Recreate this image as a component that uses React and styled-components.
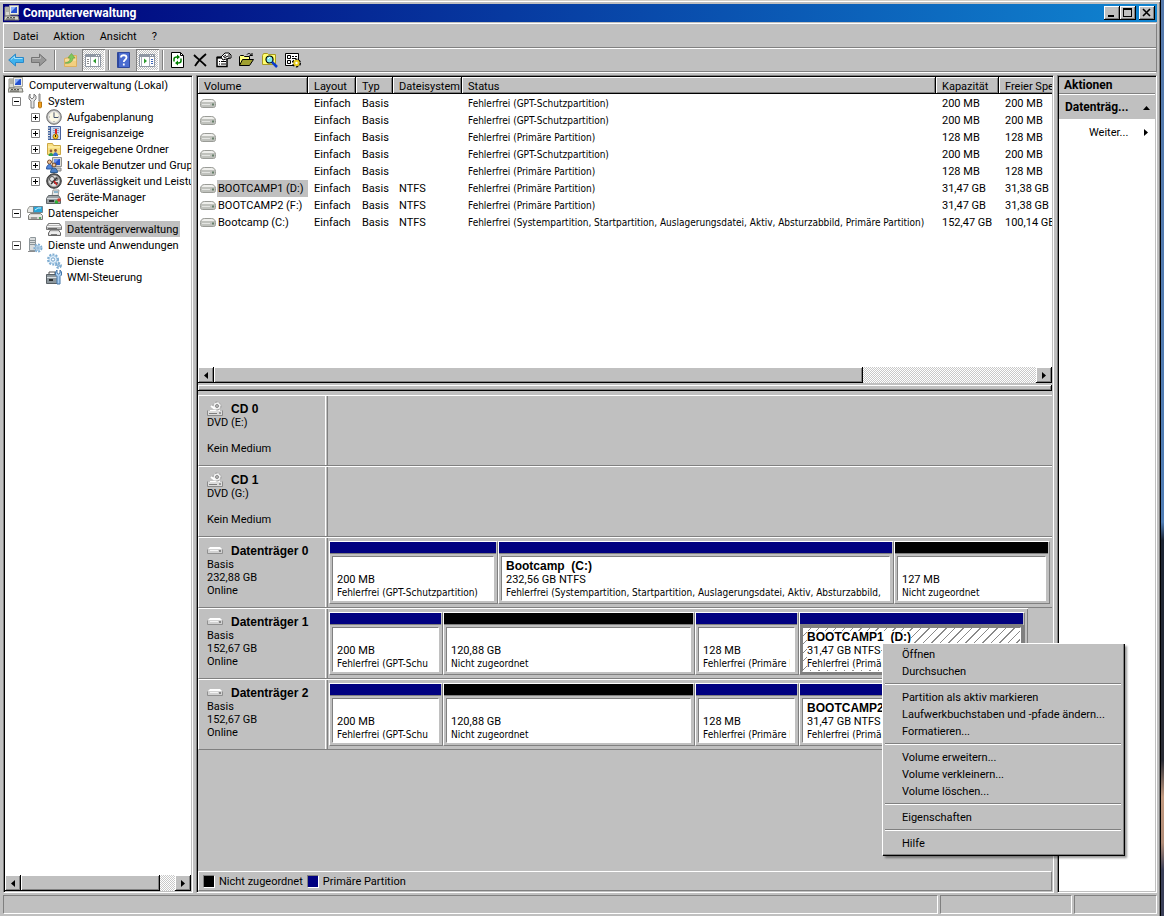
import { Fragment } from "react";
import styled, { createGlobalStyle, css } from "styled-components";

const GlobalStyle = createGlobalStyle`
  * {
    box-sizing: border-box;
  }

  body {
    margin: 0;
    font-family: Roboto, "Liberation Sans", sans-serif;
    font-size: 11px;
    line-height: 13px;
    color: #000;
    overflow: hidden;
  }

  svg {
    flex: none;
  }

  button {
    font: inherit;
    color: inherit;
    border: 0;
    padding: 0;
    background: none;
  }

  ul {
    list-style: none;
    margin: 0;
    padding: 0;
  }
`;

const raised = css`
  background: #c0c0c0;
  box-shadow: inset -1px -1px 0 #000, inset 1px 1px 0 #fff,
    inset -2px -2px 0 #808080;
`;

const Desktop = styled.div`
  height: 100vh;
  padding-right: 3px;
  background: linear-gradient(
    #5579ab 0%,
    #4f7db5 57%,
    #1c2433 59%,
    #2a2c35 83%,
    #c29a80 87%,
    #b08c78 92%,
    #3a3f58 95%
  );
`;

const Frame = styled.div`
  position: relative;
  height: 100%;
  display: flex;
  flex-direction: column;
  padding: 4px 3px 2px;
  background: #c0c0c0;
  border-right: 1px solid #000;
  box-shadow: inset 0 1px 0 #d4d0c8, inset 0 2px 0 #fff,
    inset -1px 0 0 #808080;
`;

const TitleBar = styled.header`
  height: 18px;
  flex: none;
  display: flex;
  align-items: center;
  gap: 3px;
  padding: 0 2px 0 1px;
  background: linear-gradient(90deg, #00007b, #1084d0);
  color: #fff;
`;

const Title = styled.h1`
  flex: 1;
  margin: 0;
  font-size: 12px;
  line-height: 16px;
  font-weight: 700;
`;

const CaptionButton = styled.button`
  width: 16px;
  height: 14px;
  ${raised}

  & + & {
    margin-left: -3px;
  }

  &:last-child {
    margin-left: 0;
  }

  svg {
    display: block;
    margin: auto;
  }
`;

const Bars = styled.div`
  flex: none;
  margin: 1px 0 2px;
  border: 1px solid #fff;
  border-right-color: #808080;
`;

const MenuBar = styled.nav`
  height: 24px;
  display: flex;
  align-items: center;
  padding: 2px 0 0 1px;
  border-bottom: 1px solid #808080;
`;

const MenuButton = styled.button`
  padding: 0 7px 0 8px;
`;

const Toolbar = styled.div`
  height: 24px;
  display: flex;
  align-items: center;
  padding-left: 1px;
  border-top: 1px solid #fff;
  border-bottom: 1px solid #808080;
`;

const ToolButton = styled.button`
  width: 23px;
  height: 22px;
  display: grid;
  place-items: center start;
  padding-left: 3px;
  ${(p) =>
    p.$pressed &&
    css`
      background: conic-gradient(#fff 25%, #c0c0c0 0 50%, #fff 0 75%, #c0c0c0 0)
        0 0 / 2px 2px;
      box-shadow: inset 1px 1px 0 #808080, inset -1px -1px 0 #fff;
    `}
`;

const ToolSeparator = styled.span`
  width: 2px;
  height: 20px;
  margin: 0 3px;
  border-left: 1px solid #808080;
  border-right: 1px solid #fff;
`;

const Main = styled.main`
  flex: 1;
  min-height: 0;
  display: flex;
  gap: 3px;
`;

const Panel = styled.section`
  min-width: 0;
  display: flex;
  flex-direction: column;
  padding: 1px;
  border: 1px solid #808080;
  border-right-color: #fff;
  border-bottom-color: #fff;
  box-shadow: inset 1px 1px 0 #000;
`;

const TreePanel = styled(Panel)`
  flex: 0 0 190px;
`;

const CenterPanel = styled(Panel)`
  flex: 1;
`;

const ActionPanel = styled(Panel)`
  flex: 0 0 100px;
`;

const Tree = styled.ul`
  flex: 1;
  overflow: hidden;
  background: #fff;
`;

const TreeRow = styled.li`
  height: 16px;
  display: flex;
  align-items: center;
  padding-left: ${(p) => [3, 7, 26][p.$depth]}px;
  white-space: nowrap;
`;

const Expander = styled.button`
  flex: none;
  width: 9px;
  height: 9px;
  margin-right: 6px;
  visibility: ${(p) => (p.$hidden ? "hidden" : "visible")};

  svg {
    display: block;
  }
`;

const TreeLabel = styled.span`
  margin-left: 3px;
  padding: 2px 2px 1px;
  background: ${(p) => (p.$selected ? "#c0c0c0" : "transparent")};
`;

const ScrollBar = styled.div`
  flex: none;
  height: 16px;
  display: flex;
`;

const ScrollArrow = styled.button`
  width: 16px;
  display: grid;
  place-items: center;
  ${raised}
`;

const ScrollTrack = styled.div`
  flex: 1;
  background: conic-gradient(#fff 25%, #c8c8c8 0 50%, #fff 0 75%, #c8c8c8 0) 0 0 /
    2px 2px;
`;

const ScrollThumb = styled.div`
  width: ${(p) => p.$size}%;
  height: 100%;
  ${raised}
`;

const VolumeList = styled.div`
  flex: 0 0 290px;
  overflow: hidden;
  background: #fff;
`;

const Table = styled.table`
  table-layout: fixed;
  width: 100%;
  min-width: 921px;
  border-collapse: separate;
  border-spacing: 0;
  white-space: nowrap;

  th {
    height: 17px;
    padding: 1px 0 0 6px;
    text-align: left;
    font-weight: 400;
    ${raised}
  }

  td {
    height: 17px;
    padding: 0 0 0 6px;
    overflow: hidden;
  }

  td:first-child {
    padding: 0 0 0 2px;
  }

  tbody::before {
    content: "";
    display: table-row;
    height: 1px;
  }
`;

const StatusText = styled.span`
  font-family: "DejaVu Sans Condensed", "Liberation Sans", sans-serif;
  font-size: 10px;
`;

const VolumeCell = styled.div`
  display: flex;
  align-items: center;
  height: 17px;
`;

const VolumeName = styled.span`
  flex: 1;
  margin-left: 1px;
  padding: 2px 1px;
  background: ${(p) => (p.$selected ? "#c0c0c0" : "transparent")};
`;

const Splitter = styled.div`
  flex: none;
  height: 6px;
  margin: 2px 0 4px;
  ${raised}
`;

const DiskList = styled.div`
  flex: 1;
  min-height: 0;
  overflow: hidden;
`;

const DiskRow = styled.div`
  width: ${(p) => p.$span}%;
  height: 71px;
  display: flex;
  border-top: 1px solid #fff;
  border-bottom: 1px solid #808080;
  border-left: 1px solid #fff;
`;

const DiskLabel = styled.div`
  flex: 0 0 127px;
  padding: 6px 0 0 8px;
  border-right: 1px solid #fff;
`;

const DiskTitle = styled.div`
  height: 14px;
  display: flex;
  align-items: center;
  gap: 8px;
`;

const DiskName = styled.strong`
  font-family: "Liberation Sans", Arial, sans-serif;
  font-size: 12px;
`;

const DiskLine = styled.div`
  height: 13px;
`;

const Partitions = styled.div`
  flex: 1;
  min-width: 0;
  display: grid;
  grid-template-columns: ${(p) => p.$columns};
  margin-left: 1px;
  padding: 3px 2px 3px 1px;
  border-left: 1px solid #808080;
  border-right: ${(p) => (p.$open ? "0" : "1px solid #808080")};
`;

const Partition = styled.div`
  min-width: 0;
  display: flex;
  flex-direction: column;
  border: 1px solid #fff;
  border-right-color: #808080;
  border-bottom-color: #808080;
`;

const Band = styled.div`
  height: 12px;
  margin-right: 1px;
  background: ${(p) => p.$color};
  border-bottom: 1px solid #808080;
`;

const PartitionBody = styled.div`
  flex: 1;
  padding: 2px 3px 2px 2px;
  background: ${(p) => (p.$selected ? "#808080" : "#c0c0c0")};
`;

const PartitionBox = styled.div`
  height: 100%;
  padding: 3px 4px 0;
  overflow: hidden;
  white-space: nowrap;
  border: 1px solid #fff;
  border-top-color: #808080;
  border-left-color: #808080;
  background: ${(p) =>
    p.$selected
      ? "repeating-linear-gradient(135deg, #fff 0 5px, #8a8a8a 5px 6px)"
      : "#fff"};
`;

const PartitionLine = styled.div`
  height: 13px;
  overflow: hidden;

  span,
  strong {
    display: inline-block;
    background: #fff;
    white-space: pre;
  }

  strong {
    font-family: "Liberation Sans", Arial, sans-serif;
    font-size: 12px;
  }
`;

const Legend = styled.div`
  flex: none;
  height: 20px;
  display: flex;
  align-items: center;
  gap: 4px;
  padding-left: 4px;
  border: 1px solid #808080;
  border-top-color: #fff;
  border-left-color: #fff;
`;

const Swatch = styled.span`
  width: 12px;
  height: 13px;
  background: ${(p) => p.$color};
  border: 1px solid #fff;
  border-top-color: #808080;
  border-left-color: #808080;
`;

const ActionHeader = styled.h2`
  height: 17px;
  margin: 0;
  padding: 2px 5px;
  font-size: 12px;
  line-height: 13px;
  border-bottom: 1px solid #808080;
`;

const ActionGroup = styled.button`
  height: 25px;
  flex: none;
  display: flex;
  align-items: center;
  justify-content: space-between;
  padding: 1px 5px 0 6px;
  border-top: 1px solid #fff;
  font-size: 12px;
  font-weight: 700;
`;

const ActionList = styled.div`
  flex: 1;
  padding-top: 5px;
  background: #fff;
`;

const ActionItem = styled.button`
  width: 100%;
  height: 17px;
  display: flex;
  align-items: center;
  justify-content: space-between;
  padding: 0 5px 0 30px;
`;

const StatusBar = styled.footer`
  flex: none;
  height: 19px;
  display: flex;
  gap: 2px;
  margin-top: 2px;
`;

const StatusCell = styled.div`
  flex: ${(p) => p.$flex};
  border: 1px solid #fff;
  border-top-color: #808080;
  border-left-color: #808080;
`;

const ContextMenu = styled.ul`
  position: absolute;
  left: 882px;
  top: 643px;
  width: 242px;
  padding: 3px;
  background: #c0c0c0;
  box-shadow: inset 1px 1px 0 #fff, inset -1px -1px 0 #808080, 1px 1px 0 #000,
    3px 3px 2px rgba(0, 0, 0, 0.4);
`;

const ContextButton = styled.button`
  display: block;
  width: 100%;
  height: 17px;
  padding-left: 17px;
  text-align: left;
`;

const ContextSeparator = styled.li`
  height: 2px;
  margin: 3px 0 4px;
  border-top: 1px solid #808080;
  border-bottom: 1px solid #fff;
`;

function Icon({ children }) {
  return (
    <svg width="16" height="16" viewBox="0 0 16 16" fill="none" aria-hidden="true">
      {children}
    </svg>
  );
}

const ComputerIcon = () => (
  <Icon>
    <path d="M1 2h5v9H1z" fill="#d8d8d0" stroke="#8f8f88" />
    <path d="M2 4h3M2 6h3" stroke="#8a8a80" />
    <path d="M5.500 .5h9v9h-9z" fill="#ecece6" stroke="#a5a59e" />
    <path d="M7 2h6v6H7z" fill="#2450d0" />
    <path d="M7 2h5L7 7z" fill="#8cb0f8" />
    <path d="M1 11h13l1 4H0z" fill="#d4d4cc" stroke="#77776f" />
    <path d="M3 12.500h2M6 12.500h2M9 12.500h2M2 14h9" stroke="#55554f" />
  </Icon>
);

const ToolsIcon = () => (
  <Icon>
    <path
      d="M3 1v3l2 2 2-2V1l2 2v3L7 8v7H4V8L2 6V3z"
      fill="#e6e6e6"
      stroke="#7c7c7c"
    />
    <path d="M12 1h1v7h-1z" fill="#eee" stroke="#888" />
    <path d="M11.500 9h3v5l-1 1h-1l-1-1z" fill="#f0a020" stroke="#b87410" />
  </Icon>
);

const ClockIcon = () => (
  <Icon>
    <circle cx="8" cy="8" r="7.300" fill="#b5b5b5" stroke="#717171" />
    <circle cx="8" cy="8" r="5.500" fill="#fbf8e4" stroke="#e2e2e2" />
    <path d="M8 4v4.500h4" stroke="#46536e" />
    <path d="M8 3v1M8 12v1M3 8h1M12 8h1" stroke="#8c8c8c" />
  </Icon>
);

const EventIcon = () => (
  <Icon>
    <path d="M2.500 1.500h12v13h-12z" fill="#c8d8f4" stroke="#4a629c" />
    <path d="M2 1h3v14H2z" fill="#41629e" />
    <path d="M1 3h3M1 5.500h3M1 8h3M1 10.500h3M1 13h3" stroke="#ececec" />
    <path d="M7 3.500h6M7 5.500h6M7 7.500h6" stroke="#8d9fc6" />
    <path d="M9 4h2v5H9z" fill="#d22" />
    <circle cx="9.500" cy="11.500" r="2.500" fill="#f5c52b" stroke="#a9780e" />
    <path d="M9.500 10v2" stroke="#222" />
  </Icon>
);

const SharedFolderIcon = () => (
  <Icon>
    <path d="M1.500 2.500h5l1 2h7v9h-13z" fill="#f9df80" stroke="#cba744" />
    <path d="M2 6h12" stroke="#fff4bb" />
    <circle cx="5" cy="10" r="1.400" fill="#8e5b34" />
    <circle cx="9.500" cy="9.500" r="1.400" fill="#8e5b34" />
    <path d="M2.500 15c0-4 5-4 5 0z" fill="#2fa04b" />
    <path d="M7 15c0-5 5-5 5 0z" fill="#3972cf" />
  </Icon>
);

const UsersIcon = () => (
  <Icon>
    <path d="M6.500 .5h9v9h-9z" fill="#dadad4" stroke="#93938d" />
    <path d="M8 2h6v6H8z" fill="#2653c8" />
    <path d="M8 2h5L8 7z" fill="#6d94ee" />
    <path d="M9 11h6v3H9z" fill="#c8c8c0" stroke="#888" />
    <circle cx="3.500" cy="5" r="2" fill="#edc49b" stroke="#7a4f2e" />
    <path d="M.5 12c0-6 6-6 6 0z" fill="#5287da" stroke="#2d569f" />
    <circle cx="8" cy="8" r="2" fill="#edc49b" stroke="#6f4627" />
    <path d="M4.500 15.500c0-6 7-6 7 0z" fill="#4a7fc8" stroke="#2d5a8c" />
  </Icon>
);

const GaugeIcon = () => (
  <Icon>
    <circle cx="8" cy="8" r="7.300" fill="#5a5a5a" stroke="#3c3c3c" />
    <circle cx="8" cy="8" r="5.500" fill="#e6e6e6" stroke="#aaa" />
    <circle cx="6" cy="6" r="2.500" stroke="#555" />
    <circle cx="10.500" cy="6" r="1.500" stroke="#555" />
    <path d="M5 11l6-6M8 10h4" stroke="#333" strokeWidth="1.500" />
    <path d="M8 8l3 4" stroke="#c22" strokeWidth="1.500" />
  </Icon>
);

const DeviceIcon = () => (
  <Icon>
    <path d="M7 1h6l-1 6H6z" fill="#e8e8e8" stroke="#9a9a9a" />
    <path d="M8 3h4" stroke="#8ab4cc" strokeWidth="2" />
    <path d="M.5 9.500l2-3h10l2 3v5H.5z" fill="#9aa0a4" stroke="#5f6568" />
    <path d="M1 9.500h13" stroke="#d8dcdf" />
    <path d="M3 12h5" stroke="#2f3335" strokeWidth="2" />
    <circle cx="10.500" cy="13" r="1.800" fill="#2eb135" />
    <circle cx="13" cy="11" r="1.800" fill="#d5392c" />
  </Icon>
);

const StorageIcon = () => (
  <Icon>
    <path d="M.5 4.500l2-3h6v6h-8z" fill="#e6e6e2" stroke="#95958f" />
    <path d="M6.500 1.500h9v6h-9z" fill="#28a5d8" stroke="#6d8490" />
    <path d="M8 5l3-2h3" stroke="#c8f0ff" />
    <path d="M1.500 10.500l2-2h10l2 2v4h-14z" fill="#d4d4cf" stroke="#7d7d79" />
    <path d="M2 11h13" stroke="#fff" />
    <path d="M4 13h6" stroke="#666" />
    <path d="M12 13h2" stroke="#269b38" strokeWidth="1.500" />
  </Icon>
);

const DiskManagerIcon = () => (
  <Icon>
    <path d="M.5 5.500l2-3h11l2 3v3H.5z" fill="#b8b8b8" stroke="#777" />
    <path d="M3 3.500h10M1 5.500h14" stroke="#f4f4f4" />
    <path d="M2 7.500h9" stroke="#666" />
    <path d="M2.500 12l2-3h8l2 3v2.500h-12z" fill="#dcdcdc" stroke="#666" />
    <path d="M4 12h10" stroke="#fff" />
    <path d="M5 13.500h6" stroke="#777" />
  </Icon>
);

function Gear({ cx, cy, r }) {
  return (
    <>
      <circle
        cx={cx}
        cy={cy}
        r={r}
        stroke="#7fadd2"
        strokeWidth="2"
        strokeDasharray="2 1.200"
      />
      <circle cx={cx} cy={cy} r={r - 1} fill="#e4f1fb" stroke="#9cc2e0" />
      <circle cx={cx} cy={cy} r={r / 3} fill="#fff" stroke="#6f9fc8" />
    </>
  );
}

const ServerGearIcon = () => (
  <Icon>
    <path d="M2.500 1.500l1-1h5v13h-6z" fill="#d9dcdd" stroke="#8f979b" />
    <path d="M3 3.500h5M3 5.500h5M3 7.500h5" stroke="#8b9498" />
    <path d="M1 14.500h7" stroke="#8c8c8c" />
    <Gear cx={11} cy={11} r={3.500} />
  </Icon>
);

const GearsIcon = () => (
  <Icon>
    <Gear cx={7} cy={6.500} r={5} />
    <Gear cx={12.500} cy={12.500} r={2.400} />
  </Icon>
);

const WmiIcon = () => (
  <Icon>
    <path d="M3 5V3h6v2" stroke="#555" />
    <path d="M.5 5.500h12v9H.5z" fill="#8d979d" stroke="#575f64" />
    <path d="M1 8.500h11" stroke="#dbe1e4" />
    <path d="M3 11h4" stroke="#2a2e30" strokeWidth="2" />
    <path
      d="M11 1v3l1.500 1L14 4V1l1.500 2v3L14 7.500V15h-3V7.500L9.500 6V3z"
      fill="#a8cdf0"
      stroke="#4476a8"
    />
  </Icon>
);

const DriveIcon = () => (
  <Icon>
    <path
      d="M.5 7.500c0-2 1.500-4 4-4h7c2.500 0 4 2 4 4v2c0 1-.5 2-2 2h-11c-1.500 0-2-1-2-2z"
      fill="#c0c2bd"
      stroke="#9a9c97"
    />
    <path d="M4.500 4h7c1.500 0 2.500 1 3 2h-13c.5-1 1.500-2 3-2z" fill="#efefec" />
    <path d="M2 8.500h8" stroke="#e4e5e2" />
    <path d="M12 7.500h2v2h-2z" fill="#67806b" />
  </Icon>
);

const PaleDriveIcon = () => (
  <Icon>
    <path d="M.5 6.500v4h15v-4" stroke="#909090" />
    <path d="M1 6h14v4H1z" fill="#d2d2d2" />
    <path d="M3 4h10l2 2H1z" fill="#fff" />
    <path d="M3 7.500h8" stroke="#f4f4f4" />
    <path d="M12 7h2v2h-2z" fill="#868686" />
  </Icon>
);

const CdDriveIcon = () => (
  <Icon>
    <path d="M.5 9.500v5h15v-5" stroke="#8a8a8a" />
    <path d="M1 10h14v4H1z" fill="#ddd" />
    <path d="M2 12.500h8" stroke="#7e7e7e" />
    <path d="M12 12h2" stroke="#555" />
    <path d="M3 9.500h10" stroke="#fff" />
    <circle cx="10" cy="5" r="4" fill="#f1f1f1" stroke="#999" strokeDasharray="3 1" />
    <circle cx="10" cy="5" r="1.500" fill="#bbb" stroke="#888" />
    <path d="M4 5l4 3" stroke="#fff" strokeWidth="2" />
  </Icon>
);

const BackIcon = () => (
  <Icon>
    <path
      d="M.7 8L7.500 2v3.500h8v5h-8V14z"
      fill="#3fb2ee"
      stroke="#2b88c8"
      strokeLinejoin="round"
    />
    <path d="M3 7.500L6.500 4.500v2h8" stroke="#a5e1fb" />
  </Icon>
);

const ForwardIcon = () => (
  <Icon>
    <path
      d="M15.300 8L8.500 2v3.500h-8v5h8V14z"
      fill="#989898"
      stroke="#747474"
      strokeLinejoin="round"
    />
    <path d="M1.500 6.500h8v-2" stroke="#bdbdbd" />
  </Icon>
);

const UpFolderIcon = () => (
  <Icon>
    <path d="M2.500 6.500l4-1 1-2h7v11h-12z" fill="#f3cf80" stroke="#dcb060" />
    <path d="M3 8h11" stroke="#fceab0" />
    <path
      d="M3 11c4-1 5-2 5-5H6l3.500-4.500L13 6h-2c0 4-4 6-8 5z"
      fill="#7fc95c"
      stroke="#5a9e48"
      strokeWidth=".6"
    />
  </Icon>
);

const PaneLeftIcon = () => (
  <Icon>
    <path d="M.5 2.500h15v12H.5z" fill="#fff" stroke="#8e96a2" />
    <path d="M1 4h14" stroke="#8e96a2" strokeWidth="2" />
    <path d="M11 3.500h1M13 3.500h1" stroke="#fff" />
    <path d="M2 7.500h2M2 9.500h2M2 11.500h2" stroke="#888" />
    <path d="M5.500 5v9M13.500 5v9" stroke="#a6adb8" />
    <path d="M11 6.500v5L8 9z" fill="#2c9a2c" />
  </Icon>
);

const PaneRightIcon = () => (
  <Icon>
    <path d="M.5 2.500h15v12H.5z" fill="#fff" stroke="#8e96a2" />
    <path d="M1 4h14" stroke="#8e96a2" strokeWidth="2" />
    <path d="M11 3.500h1M13 3.500h1" stroke="#fff" />
    <path d="M12 7.500h2M12 9.500h2M12 11.500h2" stroke="#3c63b8" />
    <path d="M10.500 5v9M2.500 5v9" stroke="#a6adb8" />
    <path d="M5 6.500v5L8 9z" fill="#2c9a2c" />
  </Icon>
);

const HelpIcon = () => (
  <Icon>
    <path d="M1.500 .5h12v15h-12z" fill="#4a6cd0" stroke="#2f489c" />
    <path d="M2.500 1v14" stroke="#2f489c" />
    <path
      d="M5 5.500c0-3 5.500-3 5.500 0C10.500 8 7.800 7.500 7.800 10M7.800 11.500v2"
      stroke="#fff"
      strokeWidth="1.800"
    />
  </Icon>
);

const RefreshIcon = () => (
  <Icon>
    <path d="M1.500 .5h9l3 3v12h-12z" fill="#fff" stroke="#000" />
    <path d="M10.500 .5v3h3" stroke="#000" />
    <path d="M4 9.500V7c0-1.500 1-2 3-2M11 6.500V9c0 1.500-1 2-3 2" stroke="#008000" strokeWidth="1.500" />
    <path d="M7 2.500l3 2.500-3 2.500zM8 8.500L5 11l3 2.500z" fill="#008000" />
  </Icon>
);

const DeleteIcon = () => (
  <Icon>
    <path d="M1 3c3 3 7 6 12 11M13 2C8 6 5 9 2 14" stroke="#000" strokeWidth="1.800" />
  </Icon>
);

const PropertiesIcon = () => (
  <Icon>
    <path d="M1 5.500h10v9H1z" fill="#fff" stroke="#000" strokeWidth="1.500" />
    <path d="M1 5.500h10" stroke="#000" strokeWidth="2" />
    <path d="M3 9.500h1M5 9.500h5M3 12h1M5 12h5" stroke="#000" />
    <path d="M5 5l4-4h4l2 2v3l-5 1-3 1z" fill="#fff" stroke="#000" />
    <path d="M7 5l3-2M8 6l4-2M13 2v4" stroke="#000" />
  </Icon>
);

const OpenFolderIcon = () => (
  <Icon>
    <path d="M.5 13.500v-9l1-1h3l1 1h5v3" fill="#ffff80" stroke="#000" />
    <path d="M.5 13.500l3-6h11l-4 6z" fill="#a0a030" stroke="#000" />
    <path d="M8 2.500c1-1.500 4-1.500 4 1M10.500 3.500h3M13 1v3" stroke="#000" />
  </Icon>
);

const SearchIcon = () => (
  <Icon>
    <path d="M.5 3.500l1-2h4l1 1h7v10H.5z" fill="#ffff70" stroke="#a89a20" />
    <circle cx="7.500" cy="7.500" r="3.500" fill="#7fe8f0" stroke="#000" strokeWidth="1.200" />
    <path d="M6 7l2-2" stroke="#fff" />
    <path d="M10 10l5 5" stroke="#0a3acb" strokeWidth="2.500" />
  </Icon>
);

const SettingsIcon = () => (
  <Icon>
    <path d="M.5 1.500h13v12H.5z" fill="#fff" stroke="#000" />
    <path d="M2.500 3.500h3v3h-3zM2.500 8.500h3v3h-3z" fill="#fff" stroke="#000" />
    <path d="M7 4.500h2M10 4.500h2M7 6.500h4M7 9.500h2" stroke="#000" />
    <circle cx="11.500" cy="11" r="3.200" stroke="#000" strokeWidth="2.600" strokeDasharray="2 1.400" />
    <circle cx="11.500" cy="11" r="2.200" fill="#fff" stroke="#e8cc20" strokeWidth="2" />
  </Icon>
);

function Arrow({ dir }) {
  const paths = {
    left: "M5 0v7L1 3.500z",
    right: "M1 0v7l4-3.500z",
    up: "M0 6h7L3.500 2z",
  };
  return (
    <svg width="7" height="7" viewBox="0 0 7 7" aria-hidden="true">
      <path d={paths[dir]} fill="#000" />
    </svg>
  );
}

function HScroll({ size }) {
  return (
    <ScrollBar>
      <ScrollArrow aria-label="Nach links">
        <Arrow dir="left" />
      </ScrollArrow>
      <ScrollTrack>
        <ScrollThumb $size={size} />
      </ScrollTrack>
      <ScrollArrow aria-label="Nach rechts">
        <Arrow dir="right" />
      </ScrollArrow>
    </ScrollBar>
  );
}

const menus = ["Datei", "Aktion", "Ansicht", "?"];

const tools = [
  { label: "Zurück", icon: BackIcon },
  { label: "Vorwärts", icon: ForwardIcon },
  null,
  { label: "Übergeordneter Ordner", icon: UpFolderIcon },
  { label: "Konsolenstruktur", icon: PaneLeftIcon, pressed: true },
  null,
  { label: "Hilfe", icon: HelpIcon },
  { label: "Aktionsbereich", icon: PaneRightIcon, pressed: true },
  null,
  { label: "Aktualisieren", icon: RefreshIcon },
  { label: "Löschen", icon: DeleteIcon },
  { label: "Eigenschaften", icon: PropertiesIcon },
  { label: "Öffnen", icon: OpenFolderIcon },
  { label: "Suchen", icon: SearchIcon },
  { label: "Einstellungen", icon: SettingsIcon },
];

const tree = [
  { depth: 0, label: "Computerverwaltung (Lokal)", icon: ComputerIcon },
  { depth: 1, label: "System", icon: ToolsIcon, box: "minus" },
  { depth: 2, label: "Aufgabenplanung", icon: ClockIcon, box: "plus" },
  { depth: 2, label: "Ereignisanzeige", icon: EventIcon, box: "plus" },
  { depth: 2, label: "Freigegebene Ordner", icon: SharedFolderIcon, box: "plus" },
  { depth: 2, label: "Lokale Benutzer und Gruppen", icon: UsersIcon, box: "plus" },
  { depth: 2, label: "Zuverlässigkeit und Leistung", icon: GaugeIcon, box: "plus" },
  { depth: 2, label: "Geräte-Manager", icon: DeviceIcon },
  { depth: 1, label: "Datenspeicher", icon: StorageIcon, box: "minus" },
  { depth: 2, label: "Datenträgerverwaltung", icon: DiskManagerIcon, selected: true },
  { depth: 1, label: "Dienste und Anwendungen", icon: ServerGearIcon, box: "minus" },
  { depth: 2, label: "Dienste", icon: GearsIcon },
  { depth: 2, label: "WMI-Steuerung", icon: WmiIcon },
];

const columns = [
  { name: "Volume", width: 110 },
  { name: "Layout", width: 48 },
  { name: "Typ", width: 37 },
  { name: "Dateisystem", width: 69 },
  { name: "Status", width: 474 },
  { name: "Kapazität", width: 63 },
  { name: "Freier Speicher", width: 120 },
];

const GPT = "Fehlerfrei (GPT-Schutzpartition)";
const PRIMARY = "Fehlerfrei (Primäre Partition)";
const SYSTEM =
  "Fehlerfrei (Systempartition, Startpartition, Auslagerungsdatei, Aktiv, Absturzabbild, Primäre Partition)";

const volumes = [
  ["", "", GPT, "200 MB", "200 MB"],
  ["", "", GPT, "200 MB", "200 MB"],
  ["", "", PRIMARY, "128 MB", "128 MB"],
  ["", "", GPT, "200 MB", "200 MB"],
  ["", "", PRIMARY, "128 MB", "128 MB"],
  ["BOOTCAMP1 (D:)", "NTFS", PRIMARY, "31,47 GB", "31,38 GB"],
  ["BOOTCAMP2 (F:)", "NTFS", PRIMARY, "31,47 GB", "31,38 GB"],
  ["Bootcamp (C:)", "NTFS", SYSTEM, "152,47 GB", "100,14 GB"],
];

const NAVY = "#000080";
const BLACK = "#000";

const disks = [
  { name: "CD 0", lines: ["DVD (E:)", "", "Kein Medium"], cd: true, span: 100, parts: [] },
  { name: "CD 1", lines: ["DVD (G:)", "", "Kein Medium"], cd: true, span: 100, parts: [] },
  {
    name: "Datenträger 0",
    lines: ["Basis", "232,88 GB", "Online"],
    span: 100,
    parts: [
      { weight: 169, color: NAVY, size: "200 MB", status: GPT },
      {
        weight: 396,
        color: NAVY,
        name: "Bootcamp  (C:)",
        size: "232,56 GB NTFS",
        status: "Fehlerfrei (Systempartition, Startpartition, Auslagerungsdatei, Aktiv, Absturzabbild,",
      },
      { weight: 156, color: BLACK, size: "127 MB", status: "Nicht zugeordnet" },
    ],
  },
  {
    name: "Datenträger 1",
    lines: ["Basis", "152,67 GB", "Online"],
    span: 97.2,
    parts: [
      { weight: 114, color: NAVY, size: "200 MB", status: "Fehlerfrei (GPT-Schu" },
      { weight: 252, color: BLACK, size: "120,88 GB", status: "Nicht zugeordnet" },
      { weight: 104, color: NAVY, size: "128 MB", status: PRIMARY },
      {
        weight: 226,
        color: NAVY,
        name: "BOOTCAMP1  (D:)",
        size: "31,47 GB NTFS",
        status: PRIMARY,
        selected: true,
      },
    ],
  },
  {
    name: "Datenträger 2",
    lines: ["Basis", "152,67 GB", "Online"],
    span: 97.2,
    parts: [
      { weight: 114, color: NAVY, size: "200 MB", status: "Fehlerfrei (GPT-Schu" },
      { weight: 252, color: BLACK, size: "120,88 GB", status: "Nicht zugeordnet" },
      { weight: 104, color: NAVY, size: "128 MB", status: PRIMARY },
      {
        weight: 226,
        color: NAVY,
        name: "BOOTCAMP2  (F:)",
        size: "31,47 GB NTFS",
        status: PRIMARY,
      },
    ],
  },
];

const contextGroups = [
  ["Öffnen", "Durchsuchen"],
  ["Partition als aktiv markieren", "Laufwerkbuchstaben und -pfade ändern...", "Formatieren..."],
  ["Volume erweitern...", "Volume verkleinern...", "Volume löschen..."],
  ["Eigenschaften"],
  ["Hilfe"],
];

function Disk({ disk }) {
  return (
    <DiskRow $span={disk.span}>
      <DiskLabel>
        <DiskTitle>
          {disk.cd ? <CdDriveIcon /> : <PaleDriveIcon />}
          <DiskName>{disk.name}</DiskName>
        </DiskTitle>
        {disk.lines.map((line, i) => (
          <DiskLine key={i}>{line}</DiskLine>
        ))}
      </DiskLabel>
      <Partitions
        $columns={disk.parts.map((p) => `minmax(0, ${p.weight}fr)`).join(" ")}
        $open={disk.span === 100}
      >
        {disk.parts.map((part, i) => (
          <Partition key={i}>
            <Band $color={part.color} />
            <PartitionBody $selected={part.selected}>
              <PartitionBox $selected={part.selected}>
                <PartitionLine>
                  {part.name && <strong>{part.name}</strong>}
                </PartitionLine>
                <PartitionLine>
                  <span>{part.size}</span>
                </PartitionLine>
                <PartitionLine>
                  <StatusText>{part.status}</StatusText>
                </PartitionLine>
              </PartitionBox>
            </PartitionBody>
          </Partition>
        ))}
      </Partitions>
    </DiskRow>
  );
}

function App() {
  return (
    <Desktop>
      <GlobalStyle />
      <Frame>
        <TitleBar>
          <ComputerIcon />
          <Title>Computerverwaltung</Title>
          <CaptionButton aria-label="Minimieren">
            <svg width="10" height="10" viewBox="0 0 10 10">
              <path d="M1 7h6v2H1z" />
            </svg>
          </CaptionButton>
          <CaptionButton aria-label="Maximieren">
            <svg width="10" height="10" viewBox="0 0 10 10">
              <path d="M0 0h9v9H0zM1 2v6h7V2z" fillRule="evenodd" />
            </svg>
          </CaptionButton>
          <CaptionButton aria-label="Schließen">
            <svg width="10" height="10" viewBox="0 0 10 10">
              <path d="M1 1l7 7M8 1L1 8" stroke="#000" strokeWidth="1.600" />
            </svg>
          </CaptionButton>
        </TitleBar>

        <Bars>
          <MenuBar>
            {menus.map((menu) => (
              <MenuButton key={menu}>{menu}</MenuButton>
            ))}
          </MenuBar>
          <Toolbar>
            {tools.map((tool, i) =>
              tool ? (
                <ToolButton key={i} aria-label={tool.label} $pressed={tool.pressed}>
                  <tool.icon />
                </ToolButton>
              ) : (
                <ToolSeparator key={i} />
              )
            )}
          </Toolbar>
        </Bars>

        <Main>
          <TreePanel>
            <Tree>
              {tree.map((node) => (
                <TreeRow key={node.label} $depth={node.depth}>
                  {node.depth > 0 && (
                    <Expander $hidden={!node.box} aria-label={node.label}>
                      <svg width="9" height="9" viewBox="0 0 9 9">
                        <path d="M.5 .5h8v8h-8z" fill="#fff" stroke="#808080" />
                        <path
                          d={node.box === "plus" ? "M2 4.500h5M4.500 2v5" : "M2 4.500h5"}
                          stroke="#000"
                        />
                      </svg>
                    </Expander>
                  )}
                  <node.icon />
                  <TreeLabel $selected={node.selected}>{node.label}</TreeLabel>
                </TreeRow>
              ))}
            </Tree>
            <HScroll size={90} />
          </TreePanel>

          <CenterPanel>
            <VolumeList>
              <Table>
                <colgroup>
                  {columns.map((col) => (
                    <col key={col.name} width={col.width} />
                  ))}
                </colgroup>
                <thead>
                  <tr>
                    {columns.map((col) => (
                      <th key={col.name}>{col.name}</th>
                    ))}
                  </tr>
                </thead>
                <tbody>
                  {volumes.map(([name, fs, status, size, free], i) => (
                    <tr key={i}>
                      <td>
                        <VolumeCell>
                          <DriveIcon />
                          <VolumeName $selected={i === 5}>{name}</VolumeName>
                        </VolumeCell>
                      </td>
                      <td>Einfach</td>
                      <td>Basis</td>
                      <td>{fs}</td>
                      <td>
                        <StatusText>{status}</StatusText>
                      </td>
                      <td>{size}</td>
                      <td>{free}</td>
                    </tr>
                  ))}
                </tbody>
              </Table>
            </VolumeList>
            <HScroll size={79} />
            <Splitter />
            <DiskList>
              {disks.map((disk) => (
                <Disk key={disk.name} disk={disk} />
              ))}
            </DiskList>
            <Legend>
              <Swatch $color={BLACK} />
              Nicht zugeordnet
              <Swatch $color={NAVY} />
              Primäre Partition
            </Legend>
          </CenterPanel>

          <ActionPanel>
            <ActionHeader>Aktionen</ActionHeader>
            <ActionGroup>
              Datenträg...
              <Arrow dir="up" />
            </ActionGroup>
            <ActionList>
              <ActionItem>
                Weiter...
                <Arrow dir="right" />
              </ActionItem>
            </ActionList>
          </ActionPanel>
        </Main>

        <StatusBar>
          <StatusCell $flex="1" />
          <StatusCell $flex="0 0 132px" />
          <StatusCell $flex="0 0 83px" />
        </StatusBar>

        <ContextMenu>
          {contextGroups.map((group, i) => (
            <Fragment key={i}>
              {i > 0 && <ContextSeparator />}
              {group.map((item) => (
                <li key={item}>
                  <ContextButton>{item}</ContextButton>
                </li>
              ))}
            </Fragment>
          ))}
        </ContextMenu>
      </Frame>
    </Desktop>
  );
}

export default App;
